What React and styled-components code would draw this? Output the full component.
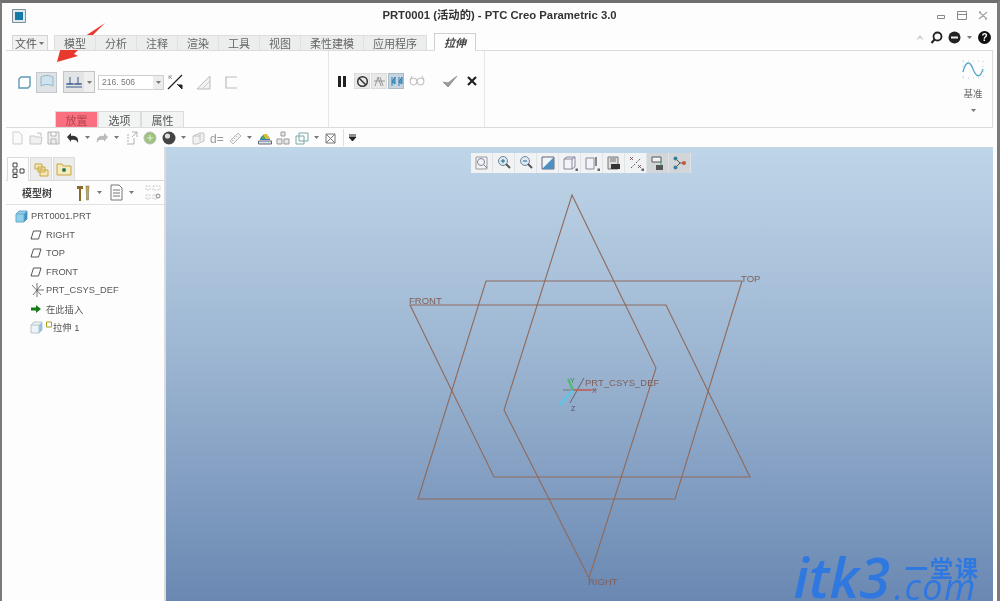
import React from "react";
import styled, { createGlobalStyle } from "styled-components";

const GlobalStyle = createGlobalStyle`
  html, body { margin: 0; padding: 0; background: #fff; }
  body { font-family: "Liberation Sans", "Noto Sans CJK SC", sans-serif; }
`;

const cjk = `"Liberation Sans", "Noto Sans CJK SC", sans-serif`;

const Ico = ({ s = 16, w, h, children }) => (
  <svg width={w || s} height={h || s} viewBox={`0 0 ${w || s} ${h || s}`} fill="none" style={{ display: "block", flex: "none" }}>
    {children}
  </svg>
);

const Caret = () => (
  <Ico w={7} h={5}>
    <path d="M1 1h5L3.500 4z" fill="#777" />
  </Ico>
);

const TABS = ["模型", "分析", "注释", "渲染", "工具", "视图", "柔性建模", "应用程序"];

const quickIcons = [
  { el: <path d="M4 2h6l3 3v9H4z" stroke="#cfcfcf" fill="#fafafa" /> },
  { el: <path d="M2 6h5l1 1h6l-1 7H2zM9 3l4 0v3" stroke="#c8c8c8" fill="#f0f0f0" /> },
  { el: <path d="M2 2h11v12H2zM5 2v4h5V2M5 14V9h5v5" stroke="#b5b5b5" fill="#eee" /> },
  { caret: 1, el: <path d="M2 7l4-4v3c5-1 8 2 7 7-1-3-3-4-7-3v2z" fill="#333" /> },
  { caret: 1, el: <path d="M14 7l-4-4v3C5 5 2 8 3 13c1-3 3-4 7-3v2z" fill="#bbb" /> },
  { el: <path d="M3 5h2M3 8h2M3 11h2M3 14h7V8M8 2h5v5M13 2L8 7" stroke="#b0b0b0" /> },
  { el: <><circle cx="8" cy="8" r="6" fill="#9cc47c" stroke="#bbb" /><path d="M5 8h6M8 5v6" stroke="#e6f0d8" /></> },
  { caret: 1, el: <><circle cx="8" cy="8" r="6.500" fill="#444" /><circle cx="6.500" cy="6" r="2.600" fill="#ddd" /></> },
  { el: <path d="M3 6l7-3h4v8l-7 3H3zM10 3v8M3 6h7" stroke="#c4c4c4" fill="#f0f0f0" /> },
  { el: <text x="1" y="13" fontSize="12" fill="#999" fontFamily="Liberation Sans">d=</text> },
  { caret: 1, el: <path d="M3 11l8-8 3 3-8 8zM5 10l1 1M7 8l1 1M9 6l1 1" stroke="#bbb" fill="#f2f2f2" /> },
  { el: <><path d="M3 10a5 5 0 0 1 10 0z" fill="#3b78c4" /><path d="M6 4l4 0 3 5H8z" fill="#d8c23c" /><path d="M4 9l2-4 3 4z" fill="#5aa85a" /><path d="M1.500 11h13v3h-13z" fill="#d8e2ee" stroke="#667" /></> },
  { el: <path d="M6 2h4v4H6zM2 9h5v5H2zM9 9h5v5H9z" stroke="#999" fill="#e8e8e8" /> },
  { caret: 1, el: <path d="M5 3h9v8H5zM2 6h8v8H2z" stroke="#7aa" /> },
  { el: <path d="M3 4h9v9H3zM3 4l9 9M12 4l-9 9" stroke="#777" /> },
];

const viewIcons = [
  <><path d="M2 2h11v12H2z" stroke="#999" fill="#f4f4f4" /><circle cx="7" cy="7" r="3.500" stroke="#78a" /><path d="M10 10l3 3" stroke="#777" /></>,
  <><circle cx="7" cy="6" r="4.500" fill="#dbe8f3" stroke="#6a8a9a" /><path d="M10 9l4 4" stroke="#555" strokeWidth="2" /><path d="M5 6h4M7 4v4" stroke="#268" /></>,
  <><circle cx="7" cy="6" r="4.500" fill="#dbe8f3" stroke="#6a8a9a" /><path d="M10 9l4 4" stroke="#555" strokeWidth="2" /><path d="M5 6h4" stroke="#268" /></>,
  <><path d="M2 2h12v12H2z" fill="#eef4f8" stroke="#667" /><path d="M2 14L14 2v12z" fill="#4d8fc0" /></>,
  <><path d="M2 4l3-2h8v10l-3 2H2zM10 4v10M2 4h8M10 4l3-2" stroke="#889" fill="#f2f5f8" /><path d="M13.500 13.500h2.500v2.500h-2.500z" fill="#666" /></>,
  <><path d="M2 3h8v11H2z" stroke="#889" fill="#f2f5f8" /><path d="M12 2v9" stroke="#888" strokeWidth="2" /><path d="M13.500 13.500h2.500v2.500h-2.500z" fill="#666" /></>,
  <><path d="M2 2h10v12H2z" fill="#ddd" stroke="#777" /><path d="M5 9h9v5H5z" fill="#333" /><path d="M4 4h6M4 6h6" stroke="#777" /></>,
  <><path d="M3 13L13 3" stroke="#556" strokeDasharray="2 1.500" /><path d="M2 2l3 3M5 2L2 5M10 10l3 3M13 10l-3 3" stroke="#644" strokeWidth=".8" /><path d="M13.500 13.500h2.500v2.500h-2.500z" fill="#666" /></>,
  <><path d="M2 2h9v5H2z" stroke="#555" fill="#f2f2f2" /><path d="M6 10h7v5H6z" fill="#555" /><path d="M11 6v5" stroke="#2a6" /></>,
  <><path d="M3 3l5 5-5 5M8 8h5" stroke="#555" /><circle cx="3.500" cy="3.500" r="2" fill="#3d7f9a" /><circle cx="3.500" cy="12.500" r="2" fill="#3d7f9a" /><circle cx="12" cy="8" r="2" fill="#c8553d" /></>,
];

const treeItems = [
  { id: "right", label: "RIGHT", kind: "plane" },
  { id: "top", label: "TOP", kind: "plane" },
  { id: "front", label: "FRONT", kind: "plane" },
  { id: "csys", label: "PRT_CSYS_DEF", kind: "csys" },
  { id: "insert", label: "在此插入", kind: "insert" },
];

const TreeIcon = ({ kind }) => {
  if (kind === "plane")
    return (
      <Ico w={12} h={10}>
        <path d="M3.500 1H11L8.500 9H1z" stroke="#555" />
      </Ico>
    );
  if (kind === "csys")
    return (
      <Ico w={15} h={14}>
        <path d="M2 2l9 10M11 2L3 12M7 0v14M7 7h7" stroke="#555" strokeWidth=".8" />
      </Ico>
    );
  return (
    <Ico w={12} h={10}>
      <path d="M1 3.500h5V1l5 4-5 4V6.500H1z" fill="#1a7a1a" />
    </Ico>
  );
};

const Cube = ({ light }) => (
  <Ico w={13} h={13}>
    <path d="M1 4l3-3h8v8l-3 3H1z" fill={light ? "#eef3f7" : "#8fd0ea"} stroke={light ? "#b8c4cc" : "#6aa9c8"} />
    <path d="M9 4l3-3v8l-3 3z" fill={light ? "#8fc4e4" : "#3f92c4"} />
    <path d="M1 4h8V12" stroke={light ? "#b8c4cc" : "#6aa9c8"} />
  </Ico>
);

export default function App() {
  return (
    <Page>
      <GlobalStyle />
      <TitleBar>
        <AppIcon>
          <Ico s={14}>
            <path d="M.5.5h13v13H.5z" fill="#dfe8ee" stroke="#7f8f99" />
            <path d="M3 3h8v8H3z" fill="#157aa6" />
          </Ico>
        </AppIcon>
        <TitleText>PRT0001 (活动的) - PTC Creo Parametric 3.0</TitleText>
        <WinControls>
          <Ico w={10} h={8}><path d="M1.500 3.500h7v3h-7z" stroke="#888" /></Ico>
          <Ico w={10} h={9}><path d="M.5.5h9v8h-9zM.5 3.500h9" stroke="#888" /></Ico>
          <Ico w={10} h={9}><path d="M1 1l8 7M9 1L1 8M1 1h2M7 8h2" stroke="#aaa" strokeWidth="1.400" /></Ico>
        </WinControls>
      </TitleBar>

      <TabRow>
        <FileTab>文件<Caret /></FileTab>
        <TabGroup>
          {TABS.map((t) => (
            <Tab key={t}>{t}</Tab>
          ))}
        </TabGroup>
        <ActiveTab>拉伸</ActiveTab>
        <HelpIcons>
          <Ico w={10} h={7}><path d="M1 6l4-5 4 5-4-2z" fill="#ccc" /></Ico>
          <Ico s={13}><circle cx="7.500" cy="5.500" r="4" stroke="#222" strokeWidth="1.800" /><path d="M4.500 8.500L1.500 12" stroke="#222" strokeWidth="2" /></Ico>
          <Ico s={13}><circle cx="6.500" cy="6.500" r="6" fill="#222" /><path d="M3 6.500h7" stroke="#eee" strokeWidth="2" /></Ico>
          <Caret />
          <Ico s={13}><circle cx="6.500" cy="6.500" r="6.500" fill="#111" /><text x="6.500" y="10" fontSize="10" fontWeight="700" textAnchor="middle" fill="#fff" fontFamily="Liberation Sans">?</text></Ico>
        </HelpIcons>
      </TabRow>

      <Ribbon>
        <PlaceGroup>
          <ControlRow>
            <Ico s={13}><path d="M3 1h9v9l-2 2H1V3z" stroke="#5c9ab4" strokeWidth="1.400" fill="#fff" /></Ico>
            <ToggleBtn>
              <Ico s={16}><path d="M2 3c4-2 8-2 12 0v9c-4-2-8-2-12 0z" fill="#cfe3ee" stroke="#8fb6c8" /></Ico>
            </ToggleBtn>
            <DepthBtn>
              <DepthFace>
                <Ico w={18} h={14}><path d="M1 9h16M1 12h16M5 2v7M13 2v7M2 9h6M10 9h6" stroke="#3a5a8a" /></Ico>
              </DepthFace>
              <DepthDrop><Caret /></DepthDrop>
            </DepthBtn>
            <ValueBox>
              <ValueText>216. 506</ValueText>
              <ValueDrop><Caret /></ValueDrop>
            </ValueBox>
            <Spaced $gap={-2}>
              <Ico w={17} h={17}><path d="M1 15L15 1" stroke="#222" strokeWidth="1.300" /><path d="M2 2h3M2 2v3M2 2l3 3" stroke="#999" /><path d="M10 10l4 4M15 15v-4h-4z" stroke="#222" fill="#222" /></Ico>
            </Spaced>
            <Spaced $gap={7}>
              <Ico s={15}><path d="M1 14L14 1v13z" stroke="#bbb" fill="#f2f2f2" /><path d="M6 14L14 6" stroke="#ccc" /></Ico>
            </Spaced>
            <Spaced $gap={9}>
              <Ico s={13}><path d="M12 1H1v11h11" stroke="#bbb" strokeWidth="1.200" /></Ico>
            </Spaced>
          </ControlRow>
          <SubTabs>
            <SubTab $active>放置</SubTab>
            <SubTab>选项</SubTab>
            <SubTab>属性</SubTab>
          </SubTabs>
        </PlaceGroup>

        <ActionGroup>
          <ActionRow>
            <Spaced $gap={0} $after={6}>
              <Ico w={10} h={13}><path d="M1 1h3v11H1zM6 1h3v11H6z" fill="#222" /></Ico>
            </Spaced>
            <SmallBtn>
              <Ico s={13}><circle cx="6.500" cy="6.500" r="4.800" stroke="#333" strokeWidth="1.500" /><path d="M3 3l7 7" stroke="#333" strokeWidth="1.500" /></Ico>
            </SmallBtn>
            <SmallBtn>
              <Ico s={14}><path d="M3 12l3-9 3 9M8 3l3 9M2 7h11" stroke="#999" /></Ico>
            </SmallBtn>
            <SmallBtn $on>
              <Ico s={14}><path d="M3 12V3M10 12V3M3 8l3-5v7zM10 8l3-5v7z" stroke="#2f7fb0" fill="#5aa0cc" /></Ico>
            </SmallBtn>
            <Spaced $gap={4}>
              <Ico w={16} h={12}><circle cx="4.500" cy="6.500" r="3.500" stroke="#bbb" /><circle cx="11.500" cy="6.500" r="3.500" stroke="#bbb" /><path d="M1 5l2-4M15 5l-2-4" stroke="#bbb" /></Ico>
            </Spaced>
            <ConfirmIcons>
              <Ico w={16} h={13}><path d="M1 7l5 5L15 1 6 8z" fill="#999" stroke="#999" strokeLinejoin="round" /></Ico>
              <Ico w={10} h={10}><path d="M1 1l8 8M9 1l-8 8" stroke="#222" strokeWidth="2.200" /></Ico>
            </ConfirmIcons>
          </ActionRow>
        </ActionGroup>

        <DatumGroup>
          <Ico s={22}>
            <path d="M1 3h20M1 20h20M1 3v17M21 3v17" stroke="#bcd" strokeDasharray="1 4" />
            <path d="M1 14C4 2 8 3 11 11s7 10 10 0" stroke="#5aa7c4" strokeWidth="1.300" />
          </Ico>
          <DatumLabel>基准</DatumLabel>
          <Caret />
        </DatumGroup>
      </Ribbon>

      <QuickBar>
        {quickIcons.map((ic, i) => (
          <QuickItem key={i} $caret={ic.caret}>
            <Ico s={16}>{ic.el}</Ico>
            {ic.caret ? <Caret /> : null}
          </QuickItem>
        ))}
        <QuickSep />
        <Ico w={9} h={8}><path d="M1 1h7M1 3h7L4.500 7z" stroke="#222" fill="#222" /></Ico>
      </QuickBar>

      <Body>
        <LeftPanel>
          <PanelTabs>
            <PanelTab $active>
              <Ico s={16}><path d="M3 1h4v4H3zM3 7h4v4H3zM3 12.500h4v3H3zM10 7h4v4h-4z" stroke="#444" /></Ico>
            </PanelTab>
            <PanelTab>
              <Ico s={16}><path d="M2 3h7v5H2zM5 6h7v5H5zM7 9h8v6H7z" stroke="#c9a640" fill="#f6e9bc" /></Ico>
            </PanelTab>
            <PanelTab>
              <Ico s={16}><path d="M1 3h5l1 2h8v9H1z" stroke="#c9a640" fill="#f6e9bc" /><circle cx="8" cy="9" r="2" fill="#2a7a5a" /></Ico>
            </PanelTab>
          </PanelTabs>
          <PanelHeader>
            <PanelTitle>模型树</PanelTitle>
            <HeaderTools>
              <Ico w={15} h={18}><path d="M1 2h6v3H5v12H3V5H1z" fill="#8a6a2a" /><path d="M10 2h3l-.5 8v6h-2v-6z" fill="#c9a640" stroke="#665" strokeWidth=".5" /></Ico>
              <Caret />
              <Spaced $gap={2}>
                <Ico w={13} h={17}><path d="M1 1h8l3 3v12H1zM3 6h7M3 9h7M3 12h7" stroke="#777" /></Ico>
              </Spaced>
              <Caret />
              <Spaced $gap={5}>
                <Ico w={16} h={15}><path d="M1 1h4v4H1zM1 10h4v4H1zM8 1h7v4H8zM8 10h4v4H8z" stroke="#ccc" strokeDasharray="2 1" /><circle cx="13" cy="11" r="2" stroke="#888" /></Ico>
              </Spaced>
            </HeaderTools>
          </PanelHeader>
          <Tree>
            <RootRow><Cube />PRT0001.PRT</RootRow>
            {treeItems.map((item) => (
              <TreeRow key={item.id}>
                <TreeIconSlot><TreeIcon kind={item.kind} /></TreeIconSlot>
                {item.label}
              </TreeRow>
            ))}
            <FeatureRow>
              <Cube light />
              <FeatureMark>
                <Ico w={6} h={7}><path d="M.5 1h5v5h-5z" stroke="#a8a020" /></Ico>
              </FeatureMark>
              拉伸 1
            </FeatureRow>
          </Tree>
        </LeftPanel>

        <Viewport>
          <PlanesSvg viewBox="0 0 827 454" width="827" height="454">
            <g stroke="#8f6a5c" strokeWidth="1.100" fill="none">
              <path d="M406 48L490 221L423 431L338 263z" />
              <path d="M320 134H576L509 352H252z" />
              <path d="M244 158H500L584 330H328z" />
            </g>
            <g fontFamily="Liberation Sans" fontSize="9.500" fill="#7f5f58">
              <text x="243" y="157">FRONT</text>
              <text x="575" y="135">TOP</text>
              <text x="422" y="438">RIGHT</text>
              <text x="419" y="239">PRT_CSYS_DEF</text>
            </g>
            <g>
              <path d="M397 243H431" stroke="#777" />
              <path d="M418 231L404 256" stroke="#666" />
              <path d="M407 243L394 258" stroke="#58c8e8" strokeWidth="2" />
              <path d="M407 243L425 243" stroke="#c8605c" strokeWidth="1.500" />
              <path d="M407 243L402 232" stroke="#4fb86a" strokeWidth="2" />
              <text x="404" y="236" fontSize="7" fill="#3a8a4a" fontFamily="Liberation Sans">Y</text>
              <text x="426" y="246" fontSize="7" fill="#a04a4a" fontFamily="Liberation Sans">X</text>
              <text x="405" y="264" fontSize="7" fill="#556" fontFamily="Liberation Sans">Z</text>
            </g>
          </PlanesSvg>
          <ViewToolbar>
            {viewIcons.map((ic, i) => (
              <ViewBtn key={i} $on={i >= 8}>
                <Ico s={16}>{ic}</Ico>
              </ViewBtn>
            ))}
          </ViewToolbar>
          <Watermark>
            <WmMain>itk3</WmMain>
            <WmSide>
              <WmCn>一堂课</WmCn>
              <WmDomain>.com</WmDomain>
            </WmSide>
          </Watermark>
        </Viewport>
      </Body>

      <Arrow width="60" height="44" viewBox="0 0 60 44">
        <path d="M55 2L24 33L28 35L7 41L12 22L17 27z" fill="#e8392f" />
      </Arrow>
    </Page>
  );
}

const Page = styled.div`
  position: relative;
  width: 1000px;
  height: 601px;
  box-sizing: border-box;
  border-top: 3px solid #6f6f6f;
  border-left: 2px solid #7a7a7a;
  border-right: 3px solid #7a7a7a;
  padding: 0 4px 0 4px;
  background: #fdfdfd;
  display: flex;
  flex-direction: column;
  overflow: hidden;
  font-family: ${cjk};
  color: #444;
  filter: blur(0.45px);
`;

const TitleBar = styled.div`
  height: 30px;
  flex: none;
  display: flex;
  align-items: center;
  justify-content: center;
  position: relative;
`;

const AppIcon = styled.div`
  position: absolute;
  left: 6px;
  top: 6px;
`;

const TitleText = styled.div`
  font-size: 11.300px;
  font-weight: 700;
  color: #333;
  margin-top: -8px;
`;

const WinControls = styled.div`
  position: absolute;
  right: 5px;
  top: 8px;
  display: flex;
  align-items: center;
  gap: 11px;
`;

const TabRow = styled.div`
  height: 17px;
  flex: none;
  display: flex;
  align-items: flex-end;
  padding-left: 6px;
  position: relative;
  z-index: 1;
`;

const FileTab = styled.div`
  width: 36px;
  height: 15px;
  box-sizing: border-box;
  background: #f1f1f1;
  border: 1px solid #d4d4d4;
  border-bottom: none;
  display: flex;
  align-items: center;
  justify-content: center;
  gap: 1px;
  font-size: 11px;
  color: #555;
`;

const TabGroup = styled.div`
  margin-left: 6px;
  height: 15px;
  display: flex;
  background: #eceded;
  border: 1px solid #dedede;
  border-bottom: none;
  box-sizing: border-box;
`;

const Tab = styled.div`
  padding: 0 9px;
  display: flex;
  align-items: center;
  justify-content: center;
  font-size: 11px;
  color: #666;
  border-right: 1px solid #e0e0e0;
  &:last-child { border-right: none; }
`;

const ActiveTab = styled.div`
  margin-left: 7px;
  width: 42px;
  height: 18px;
  box-sizing: border-box;
  background: #fdfdfd;
  border: 1px solid #d0d0d0;
  border-bottom: 1px solid #fdfdfd;
  margin-bottom: -1px;
  display: flex;
  align-items: center;
  justify-content: center;
  font-size: 11px;
  font-weight: 700;
  font-style: italic;
  color: #444;
`;

const HelpIcons = styled.div`
  position: absolute;
  right: 2px;
  top: -2px;
  display: flex;
  align-items: center;
  gap: 5px;
`;

const Ribbon = styled.div`
  height: 78px;
  flex: none;
  box-sizing: border-box;
  display: flex;
  border: 1px solid #dcdcdc;
  border-left: none;
  background: #fdfdfd;
`;

const PlaceGroup = styled.div`
  width: 323px;
  flex: none;
  box-sizing: border-box;
  border-right: 1px solid #e6e6e6;
  display: flex;
  flex-direction: column;
  justify-content: space-between;
`;

const ControlRow = styled.div`
  display: flex;
  align-items: center;
  padding: 20px 0 0 12px;
  gap: 5px;
`;

const ToggleBtn = styled.div`
  width: 21px;
  height: 21px;
  background: #dfe3e6;
  border: 1px solid #c4c8cc;
  box-sizing: border-box;
  display: flex;
  align-items: center;
  justify-content: center;
`;

const DepthBtn = styled.div`
  display: flex;
  height: 22px;
  margin-left: 1px;
  border: 1px solid #c4c4c4;
  box-sizing: border-box;
  background: #e2e4e6;
`;

const DepthFace = styled.div`
  width: 20px;
  display: flex;
  align-items: center;
  justify-content: center;
`;

const DepthDrop = styled.div`
  width: 10px;
  background: #efefef;
  display: flex;
  align-items: center;
  justify-content: center;
`;

const ValueBox = styled.div`
  width: 66px;
  height: 15px;
  margin-left: -2px;
  box-sizing: border-box;
  border: 1px solid #cfcfcf;
  background: #fff;
  display: flex;
  align-items: center;
`;

const ValueText = styled.span`
  flex: 1;
  font-size: 8.500px;
  padding-left: 3px;
  color: #777;
  font-family: "Liberation Sans", sans-serif;
`;

const ValueDrop = styled.div`
  width: 10px;
  height: 100%;
  background: #ececec;
  display: flex;
  align-items: center;
  justify-content: center;
`;

const Spaced = styled.div`
  flex: none;
  margin-left: ${(p) => p.$gap}px;
  margin-right: ${(p) => p.$after || 0}px;
`;

const SubTabs = styled.div`
  display: flex;
  margin-left: 49px;
`;

const SubTab = styled.div`
  width: 43px;
  height: 16px;
  box-sizing: border-box;
  display: flex;
  align-items: center;
  justify-content: center;
  font-size: 11px;
  border: 1px solid #dcdcdc;
  border-bottom: none;
  color: ${(p) => (p.$active ? "#b0454f" : "#555")};
  background: ${(p) => (p.$active ? "#fb7080" : "#f2f3f3")};
`;

const ActionGroup = styled.div`
  width: 156px;
  flex: none;
  box-sizing: border-box;
  border-right: 1px solid #e6e6e6;
  padding: 22px 0 0 8px;
`;

const ActionRow = styled.div`
  display: flex;
  align-items: center;
  height: 16px;
  gap: 1px;
`;

const SmallBtn = styled.div`
  width: 16px;
  height: 16px;
  background: ${(p) => (p.$on ? "#c5d4de" : "#e9e9e9")};
  border: 1px solid ${(p) => (p.$on ? "#a9bcc8" : "#dcdcdc")};
  box-sizing: border-box;
  display: flex;
  align-items: center;
  justify-content: center;
`;

const ConfirmIcons = styled.div`
  display: flex;
  align-items: center;
  gap: 9px;
  margin-left: 16px;
`;

const DatumGroup = styled.div`
  margin-left: auto;
  width: 38px;
  display: flex;
  flex-direction: column;
  align-items: center;
  padding-top: 7px;
  gap: 6px;
`;

const DatumLabel = styled.div`
  font-size: 9.500px;
  color: #666;
  margin-bottom: 2px;
`;

const QuickBar = styled.div`
  height: 19px;
  flex: none;
  display: flex;
  align-items: center;
  padding-left: 3px;
  background: #fdfdfd;
`;

const QuickItem = styled.div`
  width: ${(p) => (p.$caret ? "29.500px" : "18.500px")};
  flex: none;
  display: flex;
  align-items: center;
  gap: 3px;
`;

const QuickSep = styled.div`
  width: 1px;
  height: 17px;
  background: #e0e0e0;
  margin: 0 4px 0 1px;
`;

const Body = styled.div`
  flex: 1;
  display: flex;
  min-height: 0;
`;

const LeftPanel = styled.div`
  width: 160px;
  flex: none;
  box-sizing: border-box;
  border-right: 2px solid #dcdcdc;
  background: #fdfdfd;
  padding-top: 10px;
`;

const PanelTabs = styled.div`
  display: flex;
  height: 23px;
  padding-left: 1px;
  gap: 1px;
  border-bottom: 1px solid #d8d8d8;
`;

const PanelTab = styled.div`
  width: 22px;
  height: ${(p) => (p.$active ? "24px" : "23px")};
  box-sizing: border-box;
  background: ${(p) => (p.$active ? "#fdfdfd" : "#ececec")};
  border: 1px solid #dcdcdc;
  border-bottom: none;
  display: flex;
  align-items: center;
  justify-content: center;
`;

const PanelHeader = styled.div`
  height: 23px;
  display: flex;
  align-items: center;
  border-bottom: 1px solid #e2e2e2;
  padding-left: 16px;
`;

const PanelTitle = styled.div`
  font-size: 10px;
  font-weight: 700;
  color: #444;
  width: 54px;
  flex: none;
`;

const HeaderTools = styled.div`
  display: flex;
  align-items: center;
  gap: 5px;
`;

const Tree = styled.div`
  padding: 2px 0 0 0;
  font-size: 9.300px;
  color: #555;
`;

const RootRow = styled.div`
  height: 18.500px;
  display: flex;
  align-items: center;
  gap: 3px;
  padding-left: 9px;
`;

const TreeRow = styled.div`
  height: 18.500px;
  display: flex;
  align-items: center;
  padding-left: 24px;
`;

const TreeIconSlot = styled.div`
  width: 16px;
  flex: none;
`;

const FeatureRow = styled.div`
  height: 18.500px;
  display: flex;
  align-items: center;
  padding-left: 24px;
`;

const FeatureMark = styled.div`
  margin: -5px 1px 0 3px;
`;

const Viewport = styled.div`
  position: relative;
  flex: 1;
  min-width: 0;
  background: linear-gradient(180deg, #bfd5e8 0%, #9db6d2 45%, #6a88b2 100%);
  overflow: hidden;
`;

const PlanesSvg = styled.svg`
  display: block;
`;

const ViewToolbar = styled.div`
  position: absolute;
  left: 305px;
  top: 6px;
  display: flex;
  background: #f0f2f3;
`;

const ViewBtn = styled.div`
  width: 21px;
  height: 20px;
  display: flex;
  align-items: center;
  justify-content: center;
  border-right: 1px solid #dfe3e6;
  background: ${(p) => (p.$on ? "#d2d6d8" : "transparent")};
`;

const Watermark = styled.div`
  position: absolute;
  right: 16px;
  bottom: 3px;
  display: flex;
  align-items: flex-end;
  color: #2f78e0;
`;

const WmMain = styled.div`
  font-family: "Open Sans", sans-serif;
  font-size: 56px;
  line-height: 44px;
  font-style: italic;
  font-weight: 600;
`;

const WmSide = styled.div`
  display: flex;
  flex-direction: column;
  align-items: flex-end;
  margin-left: 4px;
`;

const WmCn = styled.div`
  font-size: 23px;
  line-height: 21px;
  font-weight: 700;
  letter-spacing: 2px;
  margin-right: -3px;
`;

const WmDomain = styled.div`
  font-family: "Open Sans", sans-serif;
  font-size: 36px;
  line-height: 14px;
  letter-spacing: 1.500px;
  font-style: italic;
  margin-bottom: 4px;
`;

const Arrow = styled.svg`
  position: absolute;
  left: 48px;
  top: 18px;
`;
